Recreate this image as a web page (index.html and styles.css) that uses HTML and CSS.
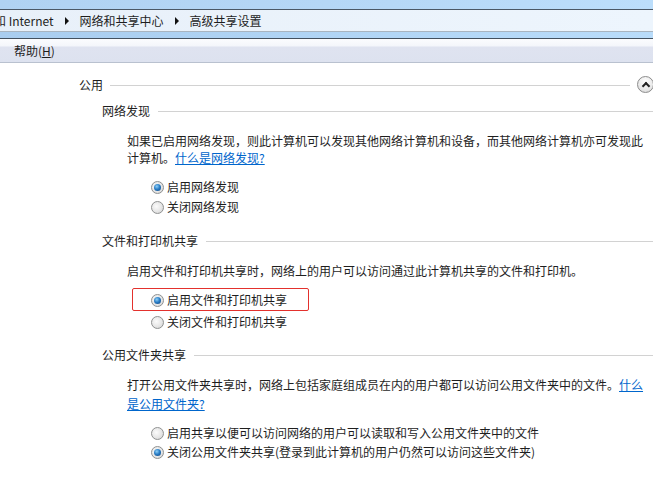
FILE: index.html
```html
<!DOCTYPE html>
<html lang="zh-CN">
<head>
  <meta charset="UTF-8">
  <title>高级共享设置</title>
  <link rel="stylesheet" href="styles.css">
</head>
<body>

  <!-- 地址栏 -->
  <div class="top-band"></div>
  <div class="address-bar">
    <span class="crumb crumb-cut">和 Internet</span>
    <span class="crumb-arrow"></span>
    <span class="crumb">网络和共享中心</span>
    <span class="crumb-arrow"></span>
    <span class="crumb">高级共享设置</span>
  </div>
  <div class="mid-band"></div>

  <!-- 菜单栏 -->
  <div class="menu-bar">
    <span class="menu-item">帮助(<u>H</u>)</span>
  </div>

  <div class="content">
    <div class="group-title">
      <span>公用</span>
      <span class="rule"></span>
      <button class="collapse"></button>
    </div>

    <div class="section">
      <div class="section-title"><span>网络发现</span><span class="rule"></span></div>
      <p class="desc">如果已启用网络发现，则此计算机可以发现其他网络计算机和设备，而其他网络计算机亦可发现此计算机。<a href="#">什么是网络发现?</a></p>
      <div class="options">
        <label class="option"><span class="radio checked"></span>启用网络发现</label>
        <label class="option"><span class="radio"></span>关闭网络发现</label>
      </div>
    </div>

    <div class="section">
      <div class="section-title"><span>文件和打印机共享</span><span class="rule"></span></div>
      <p class="desc">启用文件和打印机共享时，网络上的用户可以访问通过此计算机共享的文件和打印机。</p>
      <div class="options">
        <div class="highlight">
          <label class="option"><span class="radio checked"></span>启用文件和打印机共享</label>
        </div>
        <label class="option"><span class="radio"></span>关闭文件和打印机共享</label>
      </div>
    </div>

    <div class="section">
      <div class="section-title"><span>公用文件夹共享</span><span class="rule"></span></div>
      <p class="desc tall">打开公用文件夹共享时，网络上包括家庭组成员在内的用户都可以访问公用文件夹中的文件。<a href="#">什么是公用文件夹?</a></p>
      <div class="options tight">
        <label class="option"><span class="radio"></span>启用共享以便可以访问网络的用户可以读取和写入公用文件夹中的文件</label>
        <label class="option"><span class="radio checked"></span>关闭公用文件夹共享(登录到此计算机的用户仍然可以访问这些文件夹)</label>
      </div>
    </div>
  </div>

</body>
</html>
```

FILE: styles.css
```css
* {
  margin: 0;
  padding: 0;
  box-sizing: border-box;
}

body {
  width: 653px;
  height: 477px;
  overflow: hidden;
  background: #fff;
  font-family: "Noto Sans CJK SC", "Liberation Sans", sans-serif;
  font-size: 12px;
  color: #1e1e1e;
}

/* 顶部窗口条 */
.top-band {
  height: 10px;
  background: linear-gradient(90deg, #b0d2f2, #b6d8f7 60%, #bcdefb);
  border-bottom: 1px solid #4b5866;
}

.address-bar {
  height: 22px;
  display: flex;
  align-items: center;
  overflow: hidden;
  white-space: nowrap;
  background: linear-gradient(90deg, #e8f0f9, #edf5fd);
  border-bottom: 1px solid #a9b4bf;
}

.crumb {
  line-height: 17px;
}

.crumb-cut {
  margin-left: -6px;
}

.crumb-arrow {
  width: 0;
  height: 0;
  margin: 0 11px 0 11px;
  border-top: 4px solid transparent;
  border-bottom: 4px solid transparent;
  border-left: 4px solid #111;
}

.mid-band {
  height: 7px;
  background: linear-gradient(90deg, #a9cdef, #b2d6f6 60%, #b9dcfa);
  border-bottom: 1px solid #44515f;
}

/* 菜单栏 */
.menu-bar {
  height: 24px;
  padding-left: 14px;
  display: flex;
  align-items: center;
  background: linear-gradient(#fbfcfe 0, #f4f6fb 30%, #dfe3f0 35%, #dde2ef 100%);
  border-bottom: 1px solid #b9c1cf;
}

.menu-item {
  line-height: 17px;
}

/* 内容 */
.content {
  padding: 13px 0 0 79px;
}

.group-title,
.section-title {
  display: flex;
  align-items: center;
  line-height: 17px;
}

.group-title .rule {
  flex: 1;
  height: 1px;
  margin: 2px 7px 0 7px;
  background: #d2d2d2;
}

.collapse {
  width: 17px;
  height: 17px;
  margin-right: -1px;
  border: 1px solid #8c8c8c;
  border-radius: 50%;
  background: radial-gradient(circle at 50% 30%, #ffffff, #e4e4e4 70%, #cfcfcf);
  position: relative;
}

.collapse::after {
  content: "";
  position: absolute;
  left: 5px;
  top: 6px;
  width: 4px;
  height: 4px;
  border-left: 2px solid #222;
  border-top: 2px solid #222;
  transform: rotate(45deg);
}

.section {
  margin-left: 23px;
}

.section-title {
  margin-top: 9px;
}

.section + .section .section-title {
  margin-top: 16px;
}

.section + .section + .section .section-title {
  margin-top: 15px;
}

.section-title .rule {
  flex: 1;
  height: 1px;
  margin: 2px 0 0 8px;
  background: #d2d2d2;
}

.desc {
  margin: 13px 0 0 25px;
  line-height: 17px;
}

.desc.tall {
  margin-top: 12px;
  line-height: 19px;
}

.desc a {
  color: #0066cc;
  text-decoration: underline;
}

.options {
  margin: 10px 0 0 49px;
}

.options.tight {
  margin-top: 10px;
}

.option {
  display: flex;
  align-items: center;
  height: 20px;
  line-height: 17px;
  white-space: nowrap;
}

.options.tight .option {
  height: 19px;
}

.radio {
  width: 13px;
  height: 13px;
  margin: 2px 3px 0 0;
  border-radius: 50%;
  border: 1px solid #8f9191;
  background: radial-gradient(circle at 40% 40%, #fbfbfb, #e6e6e6 55%, #cdcdcd);
  position: relative;
  flex-shrink: 0;
}

.radio.checked::after {
  content: "";
  position: absolute;
  left: 2px;
  top: 2px;
  width: 7px;
  height: 7px;
  border-radius: 50%;
  background: radial-gradient(circle at 40% 35%, #8fd0f7, #2b7fc7 45%, #0c3f7a);
}

.highlight {
  width: 177px;
  height: 23px;
  margin: -1px 0 0 -19px;
  padding: 0 0 0 18px;
  border: 1px solid #e3312d;
  border-radius: 2px;
}

.highlight .option {
  height: 21px;
}
```
